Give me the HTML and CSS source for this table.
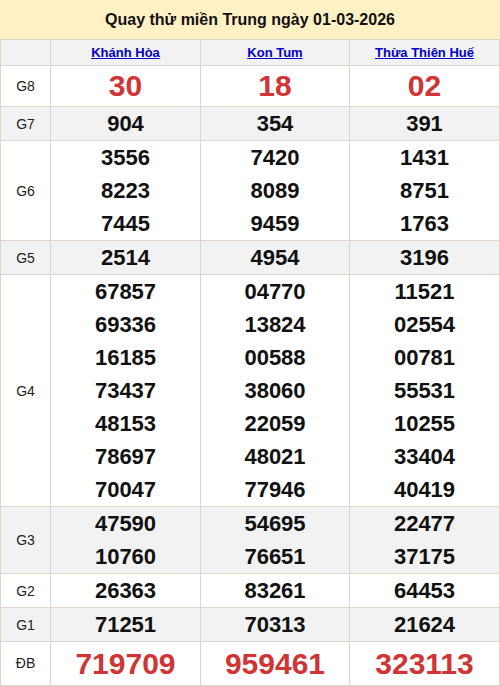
FILE: index.html
```html
<!DOCTYPE html>
<html lang="vi">
<head>
<meta charset="utf-8">
<link rel="stylesheet" href="styles.css">
</head>
<body>
<div class="title">Quay thử miền Trung ngày 01-03-2026</div>
<table class="kq">
<colgroup><col class="c0"><col class="c1"><col class="c2"><col class="c3"></colgroup>
<tr class="head"><th></th><th><a href="#">Khánh Hòa</a></th><th><a href="#">Kon Tum</a></th><th><a href="#">Thừa Thiên Huế</a></th></tr>
<tr class="g8"><td class="lbl">G8</td><td class="red">30</td><td class="red">18</td><td class="red">02</td></tr>
<tr class="alt"><td class="lbl">G7</td><td class="num"><div>904</div></td><td class="num"><div>354</div></td><td class="num"><div>391</div></td></tr>
<tr><td class="lbl">G6</td><td class="num"><div>3556</div><div>8223</div><div>7445</div></td><td class="num"><div>7420</div><div>8089</div><div>9459</div></td><td class="num"><div>1431</div><div>8751</div><div>1763</div></td></tr>
<tr class="alt"><td class="lbl">G5</td><td class="num"><div>2514</div></td><td class="num"><div>4954</div></td><td class="num"><div>3196</div></td></tr>
<tr><td class="lbl">G4</td><td class="num"><div>67857</div><div>69336</div><div>16185</div><div>73437</div><div>48153</div><div>78697</div><div>70047</div></td><td class="num"><div>04770</div><div>13824</div><div>00588</div><div>38060</div><div>22059</div><div>48021</div><div>77946</div></td><td class="num"><div>11521</div><div>02554</div><div>00781</div><div>55531</div><div>10255</div><div>33404</div><div>40419</div></td></tr>
<tr class="alt"><td class="lbl">G3</td><td class="num"><div>47590</div><div>10760</div></td><td class="num"><div>54695</div><div>76651</div></td><td class="num"><div>22477</div><div>37175</div></td></tr>
<tr><td class="lbl">G2</td><td class="num"><div>26363</div></td><td class="num"><div>83261</div></td><td class="num"><div>64453</div></td></tr>
<tr class="alt"><td class="lbl">G1</td><td class="num"><div>71251</div></td><td class="num"><div>70313</div></td><td class="num"><div>21624</div></td></tr>
<tr class="db"><td class="lbl">ĐB</td><td class="red">719709</td><td class="red">959461</td><td class="red">323113</td></tr>
</table>
</body>
</html>
```
FILE: styles.css
```css
html, body {
  margin: 0;
  padding: 0;
  background: #fff;
  font-family: "Liberation Sans", Arial, sans-serif;
  color: #111;
}
.title {
  height: 39px;
  line-height: 39px;
  background: #fff1c4;
  text-align: center;
  font-weight: bold;
  font-size: 16px;
  color: #111;
}
.kq {
  width: 500px;
  border-collapse: collapse;
  table-layout: fixed;
}
.c0 { width: 50px; }
.c1 { width: 150px; }
.c2 { width: 149px; }
.c3 { width: 150px; }
.kq th, .kq td {
  border: 1px solid #ddd6cf;
  padding: 0;
  text-align: center;
  vertical-align: middle;
}
.head th {
  background: #f2f2f2;
  height: 25px;
  line-height: 25px;
  font-size: 13px;
  font-weight: bold;
}
.head a {
  color: #0000cc;
  text-decoration: underline;
}
.lbl {
  font-size: 14px;
  color: #222;
}
.alt td {
  background: #f2f2f2;
}
.num {
  font-size: 22px;
  font-weight: bold;
  color: #111;
}
.num div {
  height: 33px;
  line-height: 33px;
}
.red {
  color: #d03434;
  font-weight: bold;
  font-size: 30px;
}
.g8 td {
  height: 40px;
  line-height: 40px;
}
.db td {
  height: 43px;
  line-height: 43px;
}
```
